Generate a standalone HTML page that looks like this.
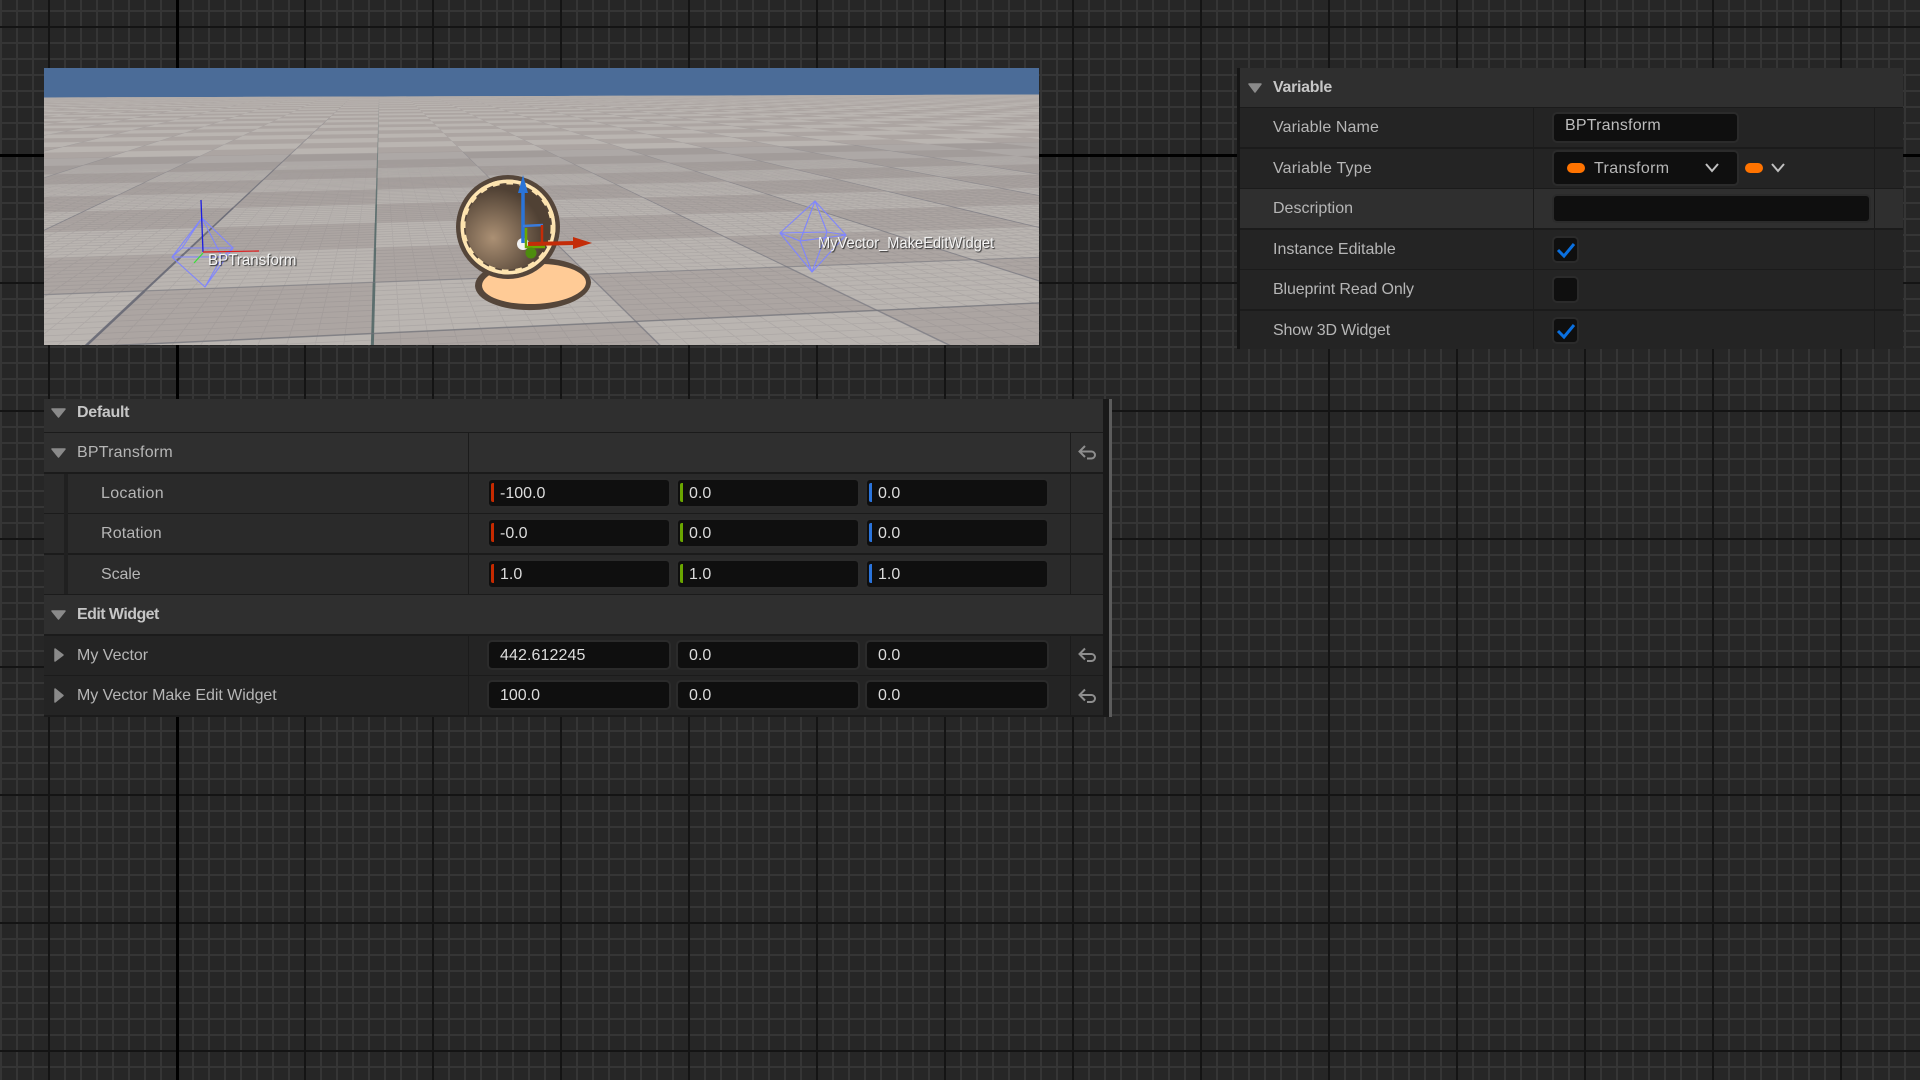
<!DOCTYPE html>
<html lang="en">
<head>
<meta charset="utf-8">
<title>Variable Details</title>
<style>
html,body{margin:0;padding:0;width:1920px;height:1080px;overflow:hidden}
body{position:relative;background-color:#262626;font-family:"Liberation Sans",sans-serif;font-size:16px;
background-image:
linear-gradient(90deg,#141414 2px,transparent 2px),
linear-gradient(180deg,#141414 2px,transparent 2px),
linear-gradient(90deg,#353535 2px,transparent 2px),
linear-gradient(180deg,#353535 2px,transparent 2px);
background-size:128px 128px,128px 128px,16px 16px,16px 16px;
background-position:48px 0,0 26px,0 0,0 10px}
div,svg{position:absolute}
.b{background:#2f2f2f}.m{background:#2a2a2a}.d{background:#242424}.s{background:#1b1b1b}
.t{white-space:nowrap;line-height:20px;height:20px;color:#b6b6b6}
.h{font-weight:bold;color:#c6c6c6}
.i{box-sizing:border-box;background:#0f0f0f;border:2px solid #2b2b2b;border-radius:5px;height:30px}
.v{white-space:nowrap;line-height:20px;height:20px;color:#dcdcdc}
.bar{width:3px;height:19px;border-radius:2px 0 0 2px}
.r{background:#c62a00}.g{background:#6aa600}.l{background:#2a74dc}
.lab{white-space:nowrap;color:#f4f4f4;font-size:16px;line-height:20px;text-shadow:1px 1px 1px #2c2c2c;transform-origin:0 50%}
</style>
</head>
<body>
<!-- thick graph lines -->
<div style="left:176px;top:0;width:3px;height:1080px;background:#000"></div>
<div style="left:0;top:154px;width:1920px;height:3px;background:#000"></div>

<!-- viewport -->
<svg id="vp" style="left:44px;top:68px" width="995" height="277" viewBox="44 68 995 277" xmlns="http://www.w3.org/2000/svg">
<defs>
<radialGradient id="rg" gradientUnits="userSpaceOnUse" cx="493" cy="238" r="50">
<stop offset="0" stop-color="#ab9074"/><stop offset="1" stop-color="#504134"/>
</radialGradient>
<linearGradient id="fade" x1="0" y1="0" x2="0" y2="1">
<stop offset="0" stop-color="#b3adaa" stop-opacity=".9"/><stop offset="1" stop-color="#b3adaa" stop-opacity="0"/>
</linearGradient>
</defs>
<rect x="44" y="68" width="995" height="277" fill="#4b6c98"/>
<g transform="rotate(-0.17 541 96)">
<rect x="36" y="96" width="1011" height="257" fill="#bab5b1"/>
<path id="chk" fill="#aca5a2"/>
<path id="fine" fill="none" stroke="#7d7a7c" stroke-width=".8" stroke-opacity=".2"/>
<g id="maj" fill="none" stroke-linecap="butt"></g>
<rect x="36" y="96" width="1011" height="12" fill="url(#fade)"/>
</g>

<!-- left wire actor -->
<g fill="none" stroke="#7f85ff" stroke-width="1.1">
<path d="M202 218L172 257L205 287L222 257ZM202 218L233 248L205 287M202 218L182 248M172 257L182 248H233L222 257H172"/>
</g>
<path d="M201 200L203 252" stroke="#1c1ce0" stroke-width="1.3"/>
<path d="M203 252L259 251" stroke="#e01c1c" stroke-width="1.2"/>
<path d="M203 253L194 263" stroke="#38e038" stroke-width="1.2"/>

<!-- right wire actor -->
<g fill="none" stroke="#7f85ff" stroke-width="1.1">
<path d="M815 201L780 233L812 272L846 235ZM815 201L800 241L812 272M815 201L827 232L812 272M780 233L800 241L846 235M780 233L827 232L846 235"/>
</g>

<!-- clock actor -->
<g transform="rotate(-2 533 284)">
<ellipse cx="533" cy="284" rx="58" ry="26" fill="#55463a"/>
<ellipse cx="534" cy="284" rx="52" ry="20" fill="#ffcb96"/>
</g>
<circle cx="508" cy="227" r="52" fill="#55463a"/>
<circle cx="508" cy="227" r="47.5" fill="#ffe6b4"/>
<circle cx="508" cy="227" r="44" fill="#55463a"/>
<circle cx="508" cy="227" r="45" fill="none" stroke="#fde3ae" stroke-width="5" stroke-dasharray="7 7"/>
<circle cx="508" cy="227" r="42.5" fill="url(#rg)"/>
<circle cx="523" cy="244" r="6" fill="#f2f2f2"/>
<path d="M523 192V243" stroke="#2a74d8" stroke-width="3.5"/>
<path d="M523 175L528 193H518Z" fill="#2a74d8"/>
<path d="M523 226L543 225" stroke="#3a7cdc" stroke-width="2.5"/>
<path d="M542 225V244" stroke="#c42c08" stroke-width="2.5"/>
<path d="M526 228V247H545" fill="none" stroke="#6aa800" stroke-width="2.5"/>
<path d="M528 244L575 243" stroke="#c42c08" stroke-width="4"/>
<path d="M573 237L592 243L573 249Z" fill="#c42c08"/>
<circle cx="531" cy="253" r="5.5" fill="#4d8c0e"/>
</svg>
<div class="lab" style="left:208px;top:251px;transform:scaleX(.945)">BPTransform</div>
<div class="lab" style="left:818px;top:234px;transform:scaleX(.917)">MyVector_MakeEditWidget</div>

<!-- Default panel -->
<div class="b" style="left:44px;top:399px;width:1059px;height:33px"></div>
<div class="b" style="left:44px;top:433px;width:1059px;height:39px"></div>
<div class="m" style="left:44px;top:474px;width:1059px;height:39px"></div>
<div class="m" style="left:44px;top:514px;width:1059px;height:39px"></div>
<div class="m" style="left:44px;top:555px;width:1059px;height:39px"></div>
<div class="b" style="left:44px;top:595px;width:1059px;height:39px"></div>
<div class="d" style="left:44px;top:636px;width:1059px;height:39px"></div>
<div class="d" style="left:44px;top:676px;width:1059px;height:39px"></div>
<div class="s" style="left:44px;top:432px;width:1059px;height:1px"></div>
<div class="s" style="left:44px;top:472px;width:1059px;height:2px"></div>
<div class="s" style="left:44px;top:513px;width:1059px;height:1px"></div>
<div class="s" style="left:44px;top:553px;width:1059px;height:2px"></div>
<div class="s" style="left:44px;top:594px;width:1059px;height:1px"></div>
<div class="s" style="left:44px;top:634px;width:1059px;height:2px"></div>
<div class="s" style="left:44px;top:675px;width:1059px;height:1px"></div>
<div class="s" style="left:44px;top:715px;width:1059px;height:2px"></div>
<div style="left:64px;top:474px;width:4px;height:120px;background:#202020"></div>
<div class="s" style="left:468px;top:433px;width:1px;height:161px"></div>
<div class="s" style="left:468px;top:636px;width:1px;height:79px"></div>
<div class="s" style="left:1070px;top:433px;width:1px;height:161px"></div>
<div class="s" style="left:1070px;top:636px;width:1px;height:79px"></div>
<div style="left:1103px;top:399px;width:6px;height:318px;background:#191919"></div>
<div style="left:1109px;top:399px;width:3px;height:318px;background:#5c5c5c"></div>

<div class="t h" style="left:77px;top:403px;letter-spacing:-.3px">Default</div>
<div class="t" style="left:77px;top:443px;letter-spacing:.2px">BPTransform</div>
<div class="t" style="left:101px;top:484px;letter-spacing:.3px">Location</div>
<div class="t" style="left:101px;top:524px;letter-spacing:.15px">Rotation</div>
<div class="t" style="left:101px;top:565px;letter-spacing:-.1px">Scale</div>
<div class="t h" style="left:77px;top:605px;letter-spacing:-.55px">Edit Widget</div>
<div class="t" style="left:77px;top:646px">My Vector</div>
<div class="t" style="left:77px;top:686px;letter-spacing:-.05px">My Vector Make Edit Widget</div>

<div class="i" style="left:487px;top:478px;width:184px"></div><div class="i" style="left:676px;top:478px;width:184px"></div><div class="i" style="left:865px;top:478px;width:184px"></div>
<div class="i" style="left:487px;top:518px;width:184px"></div><div class="i" style="left:676px;top:518px;width:184px"></div><div class="i" style="left:865px;top:518px;width:184px"></div>
<div class="i" style="left:487px;top:559px;width:184px"></div><div class="i" style="left:676px;top:559px;width:184px"></div><div class="i" style="left:865px;top:559px;width:184px"></div>
<div class="i" style="left:487px;top:640px;width:184px"></div><div class="i" style="left:676px;top:640px;width:184px"></div><div class="i" style="left:865px;top:640px;width:184px"></div>
<div class="i" style="left:487px;top:680px;width:184px"></div><div class="i" style="left:676px;top:680px;width:184px"></div><div class="i" style="left:865px;top:680px;width:184px"></div>

<div class="bar r" style="left:491px;top:483px"></div><div class="bar g" style="left:680px;top:483px"></div><div class="bar l" style="left:869px;top:483px"></div>
<div class="bar r" style="left:491px;top:523px"></div><div class="bar g" style="left:680px;top:523px"></div><div class="bar l" style="left:869px;top:523px"></div>
<div class="bar r" style="left:491px;top:564px"></div><div class="bar g" style="left:680px;top:564px"></div><div class="bar l" style="left:869px;top:564px"></div>

<div class="v" style="left:500px;top:484px">-100.0</div><div class="v" style="left:689px;top:484px">0.0</div><div class="v" style="left:878px;top:484px">0.0</div>
<div class="v" style="left:500px;top:524px">-0.0</div><div class="v" style="left:689px;top:524px">0.0</div><div class="v" style="left:878px;top:524px">0.0</div>
<div class="v" style="left:500px;top:565px">1.0</div><div class="v" style="left:689px;top:565px">1.0</div><div class="v" style="left:878px;top:565px">1.0</div>
<div class="v" style="left:500px;top:646px;letter-spacing:.1px">442.612245</div><div class="v" style="left:689px;top:646px">0.0</div><div class="v" style="left:878px;top:646px">0.0</div>
<div class="v" style="left:500px;top:686px">100.0</div><div class="v" style="left:689px;top:686px">0.0</div><div class="v" style="left:878px;top:686px">0.0</div>

<!-- Variable panel -->
<div style="left:1237px;top:68px;width:3px;height:281px;background:#161616"></div>
<div class="d" style="left:1240px;top:68px;width:663px;height:281px"></div>
<div class="b" style="left:1240px;top:68px;width:663px;height:39px"></div>
<div class="b" style="left:1240px;top:189px;width:663px;height:39px"></div>
<div class="s" style="left:1240px;top:107px;width:663px;height:1px"></div>
<div class="s" style="left:1240px;top:147px;width:663px;height:2px"></div>
<div class="s" style="left:1240px;top:188px;width:663px;height:1px"></div>
<div class="s" style="left:1240px;top:228px;width:663px;height:2px"></div>
<div class="s" style="left:1240px;top:269px;width:663px;height:1px"></div>
<div class="s" style="left:1240px;top:309px;width:663px;height:2px"></div>
<div class="s" style="left:1533px;top:108px;width:1px;height:241px"></div>
<div class="s" style="left:1874px;top:108px;width:1px;height:241px"></div>

<div class="t h" style="left:1273px;top:78px;letter-spacing:-.3px">Variable</div>
<div class="t" style="left:1273px;top:118px;letter-spacing:.1px">Variable Name</div>
<div class="t" style="left:1273px;top:159px;letter-spacing:.2px">Variable Type</div>
<div class="t" style="left:1273px;top:199px">Description</div>
<div class="t" style="left:1273px;top:240px">Instance Editable</div>
<div class="t" style="left:1273px;top:280px;letter-spacing:-.12px">Blueprint Read Only</div>
<div class="t" style="left:1273px;top:321px;letter-spacing:-.15px">Show 3D Widget</div>

<div class="i" style="left:1552px;top:112px;width:187px;height:31px"></div>
<div class="i" style="left:1552px;top:150px;width:187px;height:36px"></div>
<div class="i" style="left:1552px;top:194px;width:319px;height:29px"></div>
<div class="i" style="left:1552px;top:236px;width:27px;height:27px"></div>
<div class="i" style="left:1552px;top:276px;width:27px;height:27px"></div>
<div class="i" style="left:1552px;top:317px;width:27px;height:27px"></div>
<div class="t" style="left:1565px;top:116px;color:#bdbdbd;letter-spacing:.2px">BPTransform</div>
<div class="t" style="left:1594px;top:159px;letter-spacing:.35px">Transform</div>
<div style="left:1567px;top:163px;width:18px;height:10px;background:#ff7300;border-radius:5px"></div>
<div style="left:1745px;top:163px;width:18px;height:10px;background:#ff7300;border-radius:5px"></div>

<svg style="left:0;top:0" width="1920" height="1080" xmlns="http://www.w3.org/2000/svg">
<g fill="#8a8a8a" stroke="#8a8a8a" stroke-width="1.5" stroke-linejoin="round">
<path d="M52 409H65L58.5 417Z"/><path d="M52 449H65L58.5 457Z"/><path d="M52 611H65L58.5 619Z"/>
<path d="M55 649L63 655L55 661Z"/><path d="M55 689L63 695.5L55 702Z"/>
<path d="M1249 84H1261L1255 92Z"/>
</g>
<g fill="none" stroke="#8e8e8e" stroke-width="2">
<path d="M1085 446L1079.5 451.5L1085 457M1079.5 451.5H1091.5A3.5 3.5 0 0 1 1091.5 458.5H1087"/>
<path d="M1085 648.5L1079.5 654L1085 659.5M1079.5 654H1091.5A3.5 3.5 0 0 1 1091.5 661H1087"/>
<path d="M1085 689.5L1079.5 695L1085 700.5M1079.5 695H1091.5A3.5 3.5 0 0 1 1091.5 702H1087"/>
</g>
<g fill="none" stroke="#c0c0c0" stroke-width="2">
<path d="M1706 164L1712 171L1718 164"/><path d="M1772 164L1778 171L1784 164"/>
</g>
<g fill="none" stroke="#0a70e0" stroke-width="3">
<path d="M1558 250L1564 256L1574 244"/><path d="M1558 331L1564 337L1574 325"/>
</g>
</svg>

<script>
(function(){
/* true vanishing line sits at y=70; the finite floor ends at y=96 */
var f=979,cx=541,H=70,c=.9867,s=.1623,TX=1.03,TZ=.913,X0=-.03,Z0=3.777;
var L=36,R=1047,T=96,B=353;
function p(X,Z){var xc=X*c-Z*s,zc=X*s+Z*c;if(zc<.3)return null;return [cx+f*xc/zc,H+f/zc];}
function fm(q){return q[0].toFixed(1)+" "+q[1].toFixed(1);}
function clipPoly(P){
 var tests=[[0,L,1],[0,R,-1],[1,T,1],[1,B,-1]];
 for(var t=0;t<4;t++){
  var ax=tests[t][0],v=tests[t][1],sg=tests[t][2],out=[];
  for(var i=0;i<P.length;i++){
   var a=P[i],b=P[(i+1)%P.length],ia=(a[ax]-v)*sg>=0,ib=(b[ax]-v)*sg>=0;
   if(ia)out.push(a);
   if(ia!==ib){var u=(v-a[ax])/(b[ax]-a[ax]);out.push([a[0]+(b[0]-a[0])*u,a[1]+(b[1]-a[1])*u]);}
  }
  P=out;if(!P.length)return P;
 }
 return P;
}
function clipLine(A,B2){
 var P=clipPoly([A,B2,A]);
 if(P.length<2)return null;
 var m=[P[0],P[0]],d=-1;
 for(var i=0;i<P.length;i++)for(var j=i+1;j<P.length;j++){
  var q=Math.pow(P[i][0]-P[j][0],2)+Math.pow(P[i][1]-P[j][1],2);
  if(q>d){d=q;m=[P[i],P[j]];}
 }
 return d>.01?m:null;
}
var d=[];
for(var m=-2;m<42;m++){for(var n=-90;n<90;n++){
 if(((n+m)%2+2)%2!==1)continue;
 var a=p(X0+n*TX,Z0+m*TZ),b=p(X0+(n+1)*TX,Z0+m*TZ),e=p(X0+(n+1)*TX,Z0+(m+1)*TZ),g=p(X0+n*TX,Z0+(m+1)*TZ);
 if(!a||!b||!e||!g)continue;
 var P=clipPoly([a,b,e,g]);
 if(P.length<3)continue;
 d.push("M"+P.map(fm).join("L")+"Z");
}}
document.getElementById("chk").setAttribute("d",d.join(""));
var fd=[],k,q,r,cl;
for(k=-70;k<=110;k++){
 q=p(X0+k*TX/10,Z0-1.2*TZ);r=p(X0+k*TX/10,Z0+9*TZ);
 if(q&&r&&(cl=clipLine(q,r)))fd.push("M"+fm(cl[0])+"L"+fm(cl[1]));
}
for(k=-12;k<=90;k++){
 q=p(-10,Z0+k*TZ/10);r=p(20,Z0+k*TZ/10);
 if(q&&r&&(cl=clipLine(q,r)))fd.push("M"+fm(cl[0])+"L"+fm(cl[1]));
}
document.getElementById("fine").setAttribute("d",fd.join(""));
var maj=document.getElementById("maj"),NS="http://www.w3.org/2000/svg";
function seg(A,B2,col,wm,om){
 if(!A||!B2)return;
 var C=clipLine(A,B2);if(!C)return;
 var h=(C[0][1]+C[1][1])/2-H,w=Math.max(.5,Math.min(3,h/85))*wm,o=Math.max(.1,Math.min(.85,h/170))*om;
 var l=document.createElementNS(NS,"line");
 l.setAttribute("x1",C[0][0]);l.setAttribute("y1",C[0][1]);l.setAttribute("x2",C[1][0]);l.setAttribute("y2",C[1][1]);
 l.setAttribute("stroke",col);l.setAttribute("stroke-width",w);l.setAttribute("stroke-opacity",o);
 maj.appendChild(l);
}
var i,j;
for(i=-5;i<=6;i++){
 for(j=-2;j<36;j++){
  if(i===0)seg(p(X0,Z0+j*TZ),p(X0,Z0+(j+1)*TZ),"#4d6464",1,1);
  else if(i===-1)seg(p(X0+i*TX,Z0+j*TZ),p(X0+i*TX,Z0+(j+1)*TZ),"#5f626f",.9,.95);
  else seg(p(X0+i*TX,Z0+j*TZ),p(X0+i*TX,Z0+(j+1)*TZ),"#6d6f7a",.5,.65);
 }
}
for(j=0;j<=1;j++){
 for(i=-8;i<14;i++){
  seg(p(X0+i*TX,Z0+j*TZ),p(X0+(i+1)*TX,Z0+j*TZ),"#6e7078",.5,j===0?.8:.55);
 }
}
})();
</script>
</body>
</html>
